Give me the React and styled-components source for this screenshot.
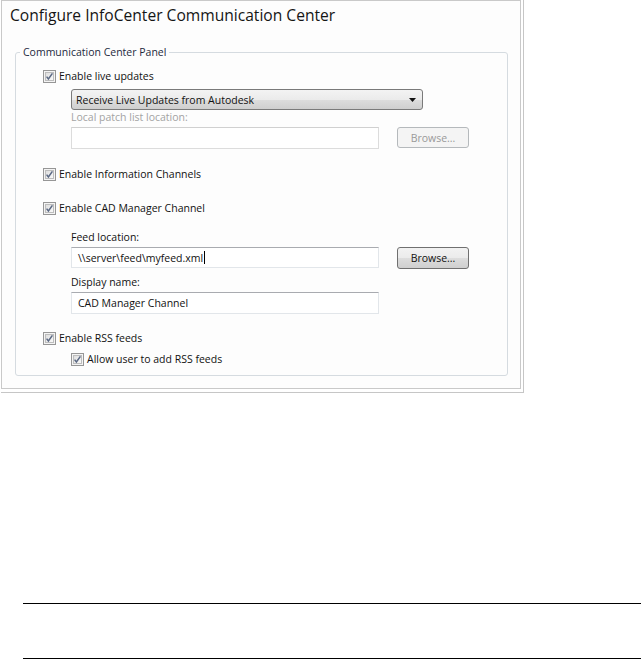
import React from "react";
import styled, { createGlobalStyle } from "styled-components";

const Global = createGlobalStyle`
  html, body { margin: 0; padding: 0; background: #fff; }
  body { font-family: "Open Sans", "Liberation Sans", sans-serif; }
`;

const Page = styled.div`
  width: 641px;
  height: 659px;
  overflow: hidden;
  display: flex;
  flex-direction: column;
`;

const Shell = styled.div`
  align-self: flex-start;
  margin-left: 1px;
  padding: 0 2px 3px 0;
  border-right: 1px solid #c6c6c6;
  border-bottom: 1px solid #c6c6c6;
`;

const Window = styled.div`
  width: 520px;
  box-sizing: border-box;
  border: 1px solid #c9c9c9;
  background: #fdfdfd;
  display: flex;
  flex-direction: column;
  padding-bottom: 12px;
`;

const Title = styled.div`
  margin: 4px 0 0 8px;
  font-size: 15.6px;
  line-height: 20px;
  color: #151515;
  white-space: nowrap;
`;

const Group = styled.fieldset`
  margin: 20px 0 0 13px;
  width: 493px;
  box-sizing: border-box;
  border: 1px solid #d5dbe0;
  border-radius: 3px;
  padding: 0 0 0 4px;
  min-width: 0;
`;

const Legend = styled.legend`
  padding: 0 3px;
  font-size: 10.5px;
  line-height: 14px;
  color: #1d2a3d;
`;

const Content = styled.div`
  display: flex;
  flex-direction: column;
  padding: 9px 0 8px 23px;
`;

const Indent = styled.div`
  display: flex;
  flex-direction: column;
  padding-left: 28px;
  margin-top: ${(p) => p.$mt || 0}px;
`;

const CheckRow = styled.label`
  display: flex;
  align-items: center;
  gap: 3px;
  height: 16px;
  margin-top: ${(p) => p.$mt || 0}px;
  font-size: 10.5px;
  color: #111;
  white-space: nowrap;
`;

const Caption = styled.div`
  height: 14px;
  line-height: 14px;
  font-size: 10.5px;
  margin-top: ${(p) => p.$mt || 0}px;
  color: ${(p) => (p.$disabled ? "#a3a3a3" : "#111")};
`;

const Combo = styled.div`
  width: 352px;
  height: 21px;
  box-sizing: border-box;
  margin-top: 5px;
  border: 1px solid #7a7a7a;
  border-radius: 3px;
  background: linear-gradient(#f3f3f3 0%, #ebebeb 50%, #dddddd 51%, #cfcfcf 100%);
  display: flex;
  align-items: center;
  justify-content: space-between;
  padding: 0 6px 0 4px;
  font-size: 10.5px;
  color: #111;
`;

const FieldRow = styled.div`
  display: flex;
  align-items: flex-start;
  gap: 18px;
  margin-top: 3px;
`;

const TextBox = styled.div`
  width: 308px;
  height: ${(p) => p.$h || 22}px;
  box-sizing: border-box;
  border: 1px solid ${(p) => (p.$disabled ? "#dcdcdc" : "#e2e6ea")};
  border-top-color: ${(p) => (p.$disabled ? "#d0d0d0" : "#a9abb0")};
  background: #fff;
  display: flex;
  align-items: center;
  padding-left: 6px;
  font-size: 10.5px;
  color: #111;
  white-space: nowrap;
`;

const Caret = styled.span`
  display: inline-block;
  width: 1px;
  height: 13px;
  background: #000;
  margin-left: 1px;
`;

const Button = styled.div`
  width: 72px;
  height: ${(p) => (p.$disabled ? 21 : 22)}px;
  box-sizing: border-box;
  border: 1px solid ${(p) => (p.$disabled ? "#b5b9bc" : "#707070")};
  border-radius: 3px;
  background: ${(p) =>
    p.$disabled
      ? "#f4f4f4"
      : "linear-gradient(#f2f2f2 0%, #ebebeb 50%, #dddddd 51%, #cfcfcf 100%)"};
  display: flex;
  align-items: center;
  justify-content: center;
  font-size: 10.5px;
  color: ${(p) => (p.$disabled ? "#9a9a9a" : "#111")};
`;

const Footnote = styled.div`
  margin: 210px 0 0 23px;
  height: 54px;
  border-top: 1px solid #000;
  border-bottom: 1px solid #000;
`;

function Check() {
  return (
    <svg width="13" height="13" viewBox="0 0 13 13" style={{ flex: "none" }}>
      <defs>
        <linearGradient id="cbg" x1="0" y1="0" x2="1" y2="1">
          <stop offset="0" stopColor="#dcdcdc" />
          <stop offset="1" stopColor="#fbfbfb" />
        </linearGradient>
      </defs>
      <rect x="0.5" y="0.5" width="12" height="12" fill="#f4f4f4" stroke="#969696" />
      <rect x="2.5" y="2.5" width="8" height="8" fill="url(#cbg)" stroke="#bdbdbd" />
      <path d="M3.6 6.6 L5.4 9 L9.4 3.4" fill="none" stroke="#5a6883" strokeWidth="1.5" />
    </svg>
  );
}

function Arrow() {
  return (
    <svg width="7" height="4" viewBox="0 0 7 4">
      <path d="M0 0 H7 L3.5 4 Z" fill="#111" />
    </svg>
  );
}

export default function App() {
  return (
    <Page>
      <Global />
      <Shell>
        <Window>
          <Title>Configure InfoCenter Communication Center</Title>
          <Group>
            <Legend>Communication Center Panel</Legend>
            <Content>
              <CheckRow>
                <Check />
                Enable live updates
              </CheckRow>
              <Indent>
                <Combo>
                  <span>Receive Live Updates from Autodesk</span>
                  <Arrow />
                </Combo>
                <Caption $disabled>Local patch list location:</Caption>
                <FieldRow>
                  <TextBox $disabled />
                  <Button $disabled>Browse...</Button>
                </FieldRow>
              </Indent>
              <CheckRow $mt={17}>
                <Check />
                Enable Information Channels
              </CheckRow>
              <CheckRow $mt={18}>
                <Check />
                Enable CAD Manager Channel
              </CheckRow>
              <Indent $mt={14}>
                <Caption>Feed location:</Caption>
                <FieldRow>
                  <TextBox $h={21}>
                    \\server\feed\myfeed.xml
                    <Caret />
                  </TextBox>
                  <Button>Browse...</Button>
                </FieldRow>
                <Caption $mt={6}>Display name:</Caption>
                <FieldRow>
                  <TextBox>CAD Manager Channel</TextBox>
                </FieldRow>
              </Indent>
              <CheckRow $mt={16}>
                <Check />
                Enable RSS feeds
              </CheckRow>
              <Indent $mt={5}>
                <CheckRow>
                  <Check />
                  Allow user to add RSS feeds
                </CheckRow>
              </Indent>
            </Content>
          </Group>
        </Window>
      </Shell>
      <Footnote />
    </Page>
  );
}
